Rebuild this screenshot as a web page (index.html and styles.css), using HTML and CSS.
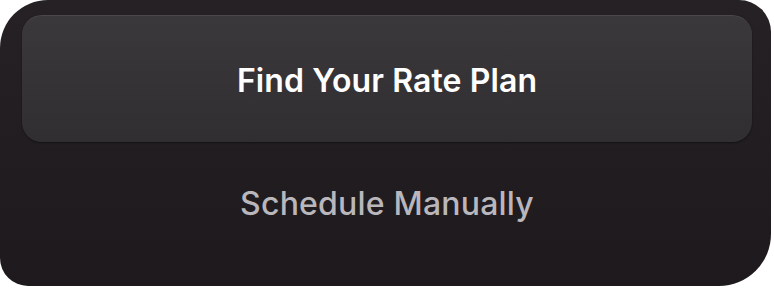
FILE: index.html
```html
<!DOCTYPE html>
<html lang="en">
<head>
    <meta charset="UTF-8">
    <title>Rate plan</title>
    <link rel="stylesheet" href="styles.css">
</head>
<body>
<div class="card">
    <button class="btn-find">Find Your Rate Plan</button>
    <button class="btn-manual">Schedule Manually</button>
</div>
</body>
</html>
```

FILE: styles.css
```css
* {
    margin: 0;
    padding: 0;
    box-sizing: border-box;
    outline: none;
}

html,
body {
    width: 100%;
    height: 100%;
    background-color: #ffffff;
}

body {
    padding: 0 3px 2px 0;
}

.card {
    width: 100%;
    height: 100%;
    padding: 15px 19px 0 22px;
    border-radius: 48px 32px 52px 28px;
    background: linear-gradient(180deg, #252124 0%, #1d191c 100%);
    display: flex;
    flex-direction: column;
    align-items: stretch;
}

.card button {
    border: none;
    background: none;
    font-family: Inter, "Noto Sans", sans-serif;
    font-size: 32px;
    cursor: pointer;
}

.btn-find {
    height: 127px;
    padding-top: 2px;
    border-radius: 20px;
    border-top: 1px solid #4a484b !important;
    background: linear-gradient(180deg, #3a383b 0%, #302e31 100%) !important;
    box-shadow: 0 1px 2px rgba(0, 0, 0, 0.4);
    font-weight: 600;
    color: #ffffff;
    letter-spacing: 0.1px;
}

.btn-manual {
    height: 120px;
    padding-top: 2px;
    font-weight: 500;
    color: #b9b7bb;
    letter-spacing: 0.2px;
}
```
